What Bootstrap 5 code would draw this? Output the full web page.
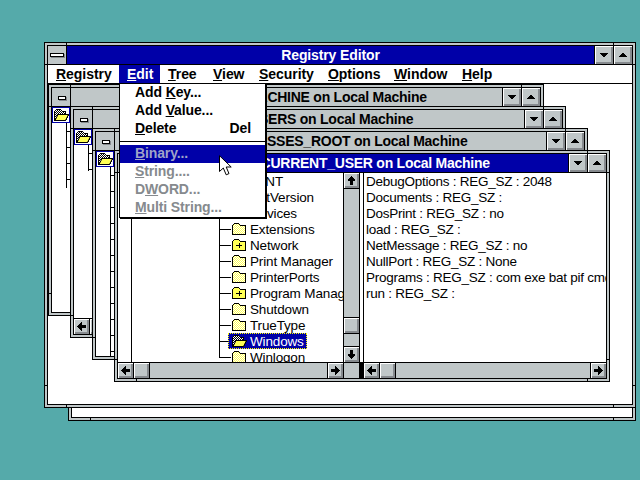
<!DOCTYPE html>
<html lang="en">
<head>
<meta charset="utf-8">
<title>Registry Editor</title>
<link href="https://cdn.jsdelivr.net/npm/bootstrap@5.3.0/dist/css/bootstrap.min.css" rel="stylesheet">
<style>
:root{--g:#c0c7c8;--d:#868a8e;--b:#0000a8;}
html,body{margin:0;background:#55aaaa;}
.desk{width:640px;height:480px;background:#55aaaa;overflow:hidden;font:14px/16px "Liberation Sans",Arial,sans-serif;color:#000;}
.fr{border:1px solid #000;padding:2px;background-color:var(--g);
 background-image:linear-gradient(#000,#000),linear-gradient(#000,#000),linear-gradient(#000,#000),linear-gradient(#000,#000);
 background-repeat:no-repeat;
 background-size:1px 100%,1px 100%,100% 1px,100% 1px;
 background-position:21px 0,calc(100% - 21px) 0,0 21px,0 calc(100% - 21px);}
.inn{border:1px solid #000;background:#fff;height:100%;overflow:hidden;}
.win-back{left:68px;top:60px;width:568px;height:361px;}
.win-main{left:44px;top:42px;width:592px;height:366px;}
.cw{width:496px;height:232px;}
.c1{left:0;top:0;}.c2{left:22px;top:22px;}.c3{left:44px;top:44px;}.c4{left:66px;top:66px;}
.tb{height:19px;border-bottom:1px solid #000;background:var(--g);flex:none;}
.tt{flex:1 1 0;min-width:0;text-align:center;font-weight:700;line-height:18px;white-space:nowrap;overflow:hidden;letter-spacing:-.13px;}
.cw .tt{letter-spacing:-.25px;}
.tb.on .tt{background:var(--b);color:#fff;}
.bx{width:18px;height:18px;flex:none;background:var(--g);}
.bx-ctl{border-right:1px solid #000;width:19px;padding:7px 0 0 2px;}
.bar-l{display:block;width:14px;height:4px;border:1px solid #000;background:#fff;box-shadow:1px 1px 0 var(--d);}
.bx-ctl.sm{padding:8px 0 0 6px;}
.bx-ctl.sm .bar-l{width:8px;height:4px;}
.bx-b{width:19px;border-left:1px solid #000;box-shadow:inset 1px 1px 0 #fff,inset -2px -2px 0 var(--d);}
.menubar{height:19px;border-bottom:1px solid #000;background:#fff;font-weight:700;line-height:18px;flex:none;}
.mi{padding:0 8px;white-space:nowrap;letter-spacing:-.05px;}
.mi.act{background:var(--b);color:#fff;}
.mi-reg{width:71px}.mi-edit{width:41px}.mi-tree{width:45px}.mi-view{width:46px}.mi-sec{width:69px}.mi-opt{width:66px}.mi-win{width:68px}
.client{flex:1 1 0;min-height:0;background:#fff;}
.pane{min-height:0;background:#fff;}
.rootico{width:18px;height:16px;border:1px solid var(--b);flex:none;display:block;}
.ticks{margin-left:14px;width:4px;background:linear-gradient(#000,#000) 0 0/1px 100% no-repeat,linear-gradient(to bottom,transparent 8px,#000 8px,#000 9px,transparent 9px) 0 0/100% 16px repeat-y;}
.t1{height:65px}.t2{height:26px}.t3{height:189px}
.treepane{flex:none;width:225px;overflow:hidden;font-size:13.5px;line-height:18px;letter-spacing:-.15px;background:linear-gradient(#000,#000) 13px 0/1px 100% no-repeat #fff;}
.tup{height:16px;white-space:nowrap;}
.tup-a{padding-left:90px}.tup-b{padding-left:108px}
.tn{height:16px;margin-left:101px;padding-left:12px;white-space:nowrap;display:flex;align-items:flex-start;background:linear-gradient(#000,#000) 0 0/1px 100% no-repeat,linear-gradient(#000,#000) 0 8px/12px 1px no-repeat;}
.tn.last{background:linear-gradient(#000,#000) 0 0/1px 9px no-repeat,linear-gradient(#000,#000) 0 8px/12px 1px no-repeat;}
.tn.sel{padding-left:9px;background:linear-gradient(#000,#000) 0 0/1px 100% no-repeat,linear-gradient(#000,#000) 0 8px/9px 1px no-repeat;}
.lbl{display:flex;align-items:flex-start;height:16px;padding:0 3px;background:var(--b);color:#fff;outline:1px dotted #ff0;outline-offset:-1px;}
.fo{width:16px;height:14px;flex:none;margin:1px 3px 0 0;display:block;}
.vs{flex:none;border-left:1px solid #000;border-right:1px solid #000;width:17px;background:var(--g);}
.sb{width:15px;height:15px;flex:none;background:var(--g);box-shadow:inset 1px 1px 0 #fff,inset -2px -2px 0 var(--d);display:flex;align-items:center;justify-content:center;}
.sb svg{display:block;width:9px;height:9px;margin:-1px 0 0 -1px;}
.vs .sbwrap{border-bottom:1px solid #000;height:16px;}
.vs .sbwrap2{border-top:1px solid #000;height:16px;margin-top:auto;}
.vthumbw{border-top:1px solid #000;border-bottom:1px solid #000;margin-top:128px;height:17px;}
.rp{flex:1 1 0;min-width:0;overflow:hidden;border-left:1px solid #000;padding-left:2px;white-space:nowrap;background:#fff;font-size:13.5px;line-height:18px;letter-spacing:-.25px;}
.gapw{width:3px;flex:none;background:#fff;}
.hs{height:16px;border-top:1px solid #000;background:var(--g);flex:none;}
.hs-l{flex:1 1 0;min-width:0;}
.hs-a{flex:none;width:225px;}
.hbtn-r{border-right:1px solid #000;box-sizing:content-box;}
.hs-t{border-right:1px solid #000;box-sizing:content-box;}
.hs-tr{flex:1 1 0;border-right:1px solid #000;}
.hs-sp{width:3px;flex:none;background:#000;}
.hs-corner{width:15px;flex:none;background:var(--g);}
.hs-fix{width:1px;flex:none;background:#000;}
.pop{position:absolute;left:119px;top:83px;width:147px;min-width:0;margin:0;padding:0;border:1px solid #000;border-radius:0;background:#fff;box-shadow:1px 1px 0 #000;font-size:14px;font-weight:700;color:#000;display:block;letter-spacing:-.12px;}
.pop .rowm{height:18px;line-height:17px;padding:0 0 0 15px;display:flex;justify-content:space-between;white-space:nowrap;}
.pop .rowm span+span{padding-right:14px;}
.pop .sepm{height:7px;background:linear-gradient(#000,#000) 0 3px/100% 1px no-repeat;}
.pop .dim{color:var(--d);}
.pop .hil{background:var(--b);color:#9fa4c8;}
.ptr{left:219px;top:155px;width:13px;height:21px;z-index:1001;}
.rows div{height:16px;}
.bpx{shape-rendering:crispEdges;}
</style>
</head>
<body>
<svg width="0" height="0" class="position-absolute">
 <defs>
  <pattern id="dy" width="2" height="2" patternUnits="userSpaceOnUse"><rect width="2" height="2" fill="#ffff55"/><rect width="1" height="1" fill="#fff"/><rect x="1" y="1" width="1" height="1" fill="#fff"/></pattern>
  <pattern id="dk" width="2" height="2" patternUnits="userSpaceOnUse"><rect width="2" height="2" fill="#fff"/><rect width="1" height="1" fill="#000"/><rect x="1" y="1" width="1" height="1" fill="#000"/></pattern>
  <symbol id="fc" viewBox="0 0 16 14"><path class="bpx" d="M1.5 12.5V3.5L3.5 1.5H7.5L9.5 3.5H14.5V12.5Z" fill="url(#dy)" stroke="#000"/></symbol>
  <symbol id="fp" viewBox="0 0 16 14"><path class="bpx" d="M1.5 12.5V3.5L3.5 1.5H7.5L9.5 3.5H14.5V12.5Z" fill="#ffff55" stroke="#000"/><path class="bpx" d="M5 7.5H11M8 5V10" stroke="#000"/></symbol>
  <symbol id="fo" viewBox="0 0 16 14"><path class="bpx" d="M1.5 12.5V3.5L3.5 1.5H7.5L9.5 3.5H12.5V6.5H15.5L12.5 12.5Z" fill="url(#dk)" stroke="#000"/><path d="M2 12.5L5 6.5H15.5L12.5 12.5Z" fill="#ffff55" stroke="#000"/></symbol>
  <symbol id="au" viewBox="0 0 9 9"><path class="bpx" d="M4 0h1v1h1v1h1v1h1v2H6v4H3V5H1V3h1V2h1V1h1z"/></symbol>
  <symbol id="ad" viewBox="0 0 9 9"><path class="bpx" d="M3 0h3v4h2v2H7v1H6v1H5v1H4V8H3V7H2V6H1V4h2z"/></symbol>
  <symbol id="al" viewBox="0 0 9 9"><path class="bpx" d="M0 4h1V3h1V2h1V1h1V0h1v3h4v3H5v3H4V8H3V7H2V6H1V5H0z"/></symbol>
  <symbol id="ar" viewBox="0 0 9 9"><path class="bpx" d="M9 4H8V3H7V2H6V1H5V0H4v3H0v3h4v3h1V8h1V7h1V6h1V5h1z"/></symbol>
  <symbol id="td" viewBox="0 0 18 18"><path class="bpx" d="M5 7h8v1h-1v1h-1v1h-1v1H8v-1H7V9H6V8H5z"/></symbol>
  <symbol id="tu" viewBox="0 0 18 18"><path class="bpx" d="M8 7h2v1h1v1h1v1h1v1H5v-1h1V9h1V8h1z"/></symbol>
 </defs>
</svg>

<div class="desk position-relative">
 <div class="fr win-back position-absolute"><div class="inn"></div></div>

 <div class="fr win-main position-absolute">
  <div class="inn d-flex flex-column">
   <div class="tb on d-flex">
    <div class="bx bx-ctl"><span class="bar-l"></span></div>
    <div class="tt">Registry Editor</div>
    <div class="bx bx-b"><svg width="18" height="18"><use href="#td"/></svg></div>
    <div class="bx bx-b"><svg width="18" height="18"><use href="#tu"/></svg></div>
   </div>
   <div class="menubar d-flex">
    <span class="mi mi-reg"><u>R</u>egistry</span>
    <span class="mi mi-edit act"><u>E</u>dit</span>
    <span class="mi mi-tree"><u>T</u>ree</span>
    <span class="mi mi-view"><u>V</u>iew</span>
    <span class="mi mi-sec"><u>S</u>ecurity</span>
    <span class="mi mi-opt"><u>O</u>ptions</span>
    <span class="mi mi-win"><u>W</u>indow</span>
    <span class="mi"><u>H</u>elp</span>
   </div>
   <div class="client position-relative overflow-hidden">

    <div class="fr cw c1 position-absolute"><div class="inn d-flex flex-column">
     <div class="tb d-flex"><div class="bx bx-ctl sm"><span class="bar-l"></span></div><div class="tt">HKEY_LOCAL_MACHINE on Local Machine</div><div class="bx bx-b"><svg width="18" height="18"><use href="#td"/></svg></div><div class="bx bx-b"><svg width="18" height="18"><use href="#tu"/></svg></div></div>
     <div class="pane flex-grow-1"><svg class="rootico" viewBox="0 0 16 14"><use href="#fo"/></svg><div class="ticks t1"></div></div>
    </div></div>

    <div class="fr cw c2 position-absolute"><div class="inn d-flex flex-column">
     <div class="tb d-flex"><div class="bx bx-ctl sm"><span class="bar-l"></span></div><div class="tt">HKEY_USERS on Local Machine</div><div class="bx bx-b"><svg width="18" height="18"><use href="#td"/></svg></div><div class="bx bx-b"><svg width="18" height="18"><use href="#tu"/></svg></div></div>
     <div class="pane flex-grow-1"><svg class="rootico" viewBox="0 0 16 14"><use href="#fo"/></svg><div class="ticks t2"></div></div>
     <div class="hs d-flex"><div class="sb hbtn-r"><svg><use href="#al"/></svg></div><div class="sb"></div></div>
    </div></div>

    <div class="fr cw c3 position-absolute"><div class="inn d-flex flex-column">
     <div class="tb d-flex"><div class="bx bx-ctl sm"><span class="bar-l"></span></div><div class="tt">HKEY_CLASSES_ROOT on Local Machine</div><div class="bx bx-b"><svg width="18" height="18"><use href="#td"/></svg></div><div class="bx bx-b"><svg width="18" height="18"><use href="#tu"/></svg></div></div>
     <div class="pane flex-grow-1"><svg class="rootico" viewBox="0 0 16 14"><use href="#fo"/></svg><div class="ticks t3"></div></div>
    </div></div>

    <div class="fr cw c4 position-absolute"><div class="inn d-flex flex-column">
     <div class="tb on d-flex"><div class="bx bx-ctl sm"><span class="bar-l"></span></div><div class="tt">HKEY_CURRENT_USER on Local Machine</div><div class="bx bx-b"><svg width="18" height="18"><use href="#td"/></svg></div><div class="bx bx-b"><svg width="18" height="18"><use href="#tu"/></svg></div></div>
     <div class="d-flex flex-grow-1 pane overflow-hidden">
      <div class="treepane">
       <div class="tup tup-a">Windows NT</div>
       <div class="tup tup-b">CurrentVersion</div>
       <div class="tn"><svg class="fo"><use href="#fc"/></svg>Devices</div>
       <div class="tn"><svg class="fo"><use href="#fc"/></svg>Extensions</div>
       <div class="tn"><svg class="fo"><use href="#fp"/></svg>Network</div>
       <div class="tn"><svg class="fo"><use href="#fc"/></svg>Print Manager</div>
       <div class="tn"><svg class="fo"><use href="#fc"/></svg>PrinterPorts</div>
       <div class="tn"><svg class="fo"><use href="#fp"/></svg>Program Manager</div>
       <div class="tn"><svg class="fo"><use href="#fc"/></svg>Shutdown</div>
       <div class="tn"><svg class="fo"><use href="#fc"/></svg>TrueType</div>
       <div class="tn sel"><span class="lbl"><svg class="fo"><use href="#fo"/></svg>Windows</span></div>
       <div class="tn last"><svg class="fo"><use href="#fc"/></svg>Winlogon</div>
      </div>
      <div class="vs d-flex flex-column">
       <div class="sbwrap"><div class="sb"><svg><use href="#au"/></svg></div></div>
       <div class="vthumbw"><div class="sb"></div></div>
       <div class="sbwrap2"><div class="sb"><svg><use href="#ad"/></svg></div></div>
      </div>
      <div class="gapw"></div>
      <div class="rp rows">
       <div>DebugOptions : REG_SZ : 2048</div>
       <div>Documents : REG_SZ :</div>
       <div>DosPrint : REG_SZ : no</div>
       <div>load : REG_SZ :</div>
       <div>NetMessage : REG_SZ : no</div>
       <div>NullPort : REG_SZ : None</div>
       <div>Programs : REG_SZ : com exe bat pif cmd</div>
       <div>run : REG_SZ :</div>
      </div>
     </div>
     <div class="hs d-flex">
      <div class="hs-a d-flex">
       <div class="sb hbtn-r"><svg><use href="#al"/></svg></div>
       <div class="sb hs-t"></div>
       <div class="hs-tr"></div>
       <div class="sb"><svg><use href="#ar"/></svg></div>
      </div>
      <div class="hs-fix"></div>
      <div class="hs-corner"></div>
      <div class="hs-fix"></div>
      <div class="hs-sp"></div>
      <div class="hs-l d-flex">
       <div class="hs-fix"></div>
       <div class="sb hbtn-r"><svg><use href="#al"/></svg></div>
       <div class="sb hs-t"></div>
       <div class="hs-tr"></div>
       <div class="sb"><svg><use href="#ar"/></svg></div>
      </div>
     </div>
    </div></div>

   </div>
  </div>
 </div>

 <div class="dropdown-menu pop">
  <div class="rowm"><span>Add <u>K</u>ey...</span></div>
  <div class="rowm"><span>Add <u>V</u>alue...</span></div>
  <div class="rowm"><span><u>D</u>elete</span><span>Del</span></div>
  <div class="sepm"></div>
  <div class="rowm hil"><span><u>B</u>inary...</span></div>
  <div class="rowm dim"><span><u>S</u>tring....</span></div>
  <div class="rowm dim"><span>D<u>W</u>ORD...</span></div>
  <div class="rowm dim"><span><u>M</u>ulti String...</span></div>
 </div>

 <svg class="ptr position-absolute" viewBox="0 0 13 21"><path d="M.5.7V16.5L4.3 13 7.2 19.8 10 18.6 7.2 12H12.2Z" fill="#fff" stroke="#000"/></svg>
</div>
<script src="https://cdn.jsdelivr.net/npm/bootstrap@5.3.0/dist/js/bootstrap.bundle.min.js"></script>
</body>
</html>
